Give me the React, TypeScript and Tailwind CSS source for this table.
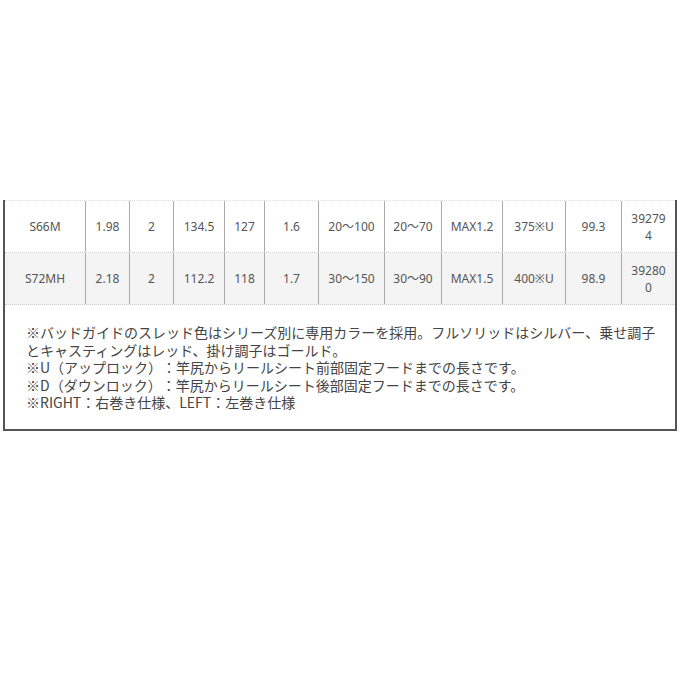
import React from "react";

const rows = [
  ["S66M", "1.98", "2", "134.5", "127", "1.6", "20～100", "20～70", "MAX1.2", "375※U", "99.3", ["39279", "4"]],
  ["S72MH", "2.18", "2", "112.2", "118", "1.7", "30～150", "30～90", "MAX1.5", "400※U", "98.9", ["39280", "0"]],
];

export default function App() {
  return (
    <div
      className="w-[680px] h-[680px] bg-white text-[#555]"
      style={{ fontFamily: '"Noto Sans", "Noto Sans CJK JP", sans-serif' }}
    >
      <div className="h-[200px]" />
      <div className="ml-[3px] w-[674px] border-l-2 border-r-2 border-b-2 border-[#555]">
        <div className="border-t border-dotted border-[#ddd]">
          {rows.map((r, i) => (
            <div
              key={i}
              className={`grid grid-cols-[81px_44px_44px_51px_40px_54px_66px_57px_61px_63px_56px_53px] border-b border-dotted border-[#ccc] ${
                i === 1 ? "bg-[#f4f4f4]" : "bg-white"
              }`}
            >
              {r.map((c, j) => (
                <div
                  key={j}
                  className={`h-[51px] flex items-center justify-center text-center text-[12px] leading-[17px] ${
                    j < 11 ? "border-r border-[#aaa]" : ""
                  }`}
                >
                  {Array.isArray(c) ? (
                    <span>
                      {c[0]}
                      <br />
                      {c[1]}
                    </span>
                  ) : (
                    c
                  )}
                </div>
              ))}
            </div>
          ))}
        </div>
        <div
          className="pl-[21px] pt-[19px] pb-[17px] text-[14px] leading-[17.5px] text-[#444] whitespace-nowrap [text-spacing-trim:space-all]"
          style={{ fontFamily: '"Noto Sans CJK JP", sans-serif' }}
        >
          <div>※バッドガイドのスレッド色はシリーズ別に専用カラーを採用。フルソリッドはシルバー、乗せ調子</div>
          <div>とキャスティングはレッド、掛け調子はゴールド。</div>
          <div>※U（アップロック）：竿尻からリールシート前部固定フードまでの長さです。</div>
          <div>※D（ダウンロック）：竿尻からリールシート後部固定フードまでの長さです。</div>
          <div>※RIGHT：右巻き仕様、LEFT：左巻き仕様</div>
        </div>
      </div>
    </div>
  );
}
